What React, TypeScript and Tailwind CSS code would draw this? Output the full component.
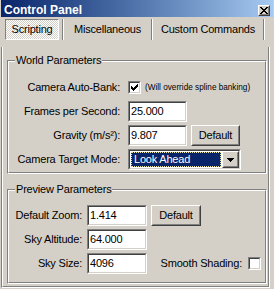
import React from "react";

function PixelGlyph({ rows, color = "#000" }: { rows: string[]; color?: string }) {
  const w = rows[0].length;
  const h = rows.length;
  const rects: React.ReactNode[] = [];
  rows.forEach((r, y) =>
    r.split("").forEach((c, x) => {
      if (c === "X") rects.push(<rect key={`${x}-${y}`} x={x} y={y} width={1} height={1} fill={color} />);
    })
  );
  return (
    <svg width={w} height={h} viewBox={`0 0 ${w} ${h}`} shapeRendering="crispEdges" className="block">
      {rects}
    </svg>
  );
}

const CLOSE = ["XX....XX", ".XX..XX.", "..XXXX..", "...XX...", "..XXXX..", ".XX..XX.", "XX....XX"];
const CHECK = ["......X", ".....XX", "X...XXX", "XX.XXX.", "XXXXX..", ".XXX...", "..X...."];
const ARROW = ["XXXXXXX", ".XXXXX.", "..XXX..", "...X..."];

function Sunken({ className = "", innerClass = "", children }: { className?: string; innerClass?: string; children?: React.ReactNode }) {
  return (
    <div className={`border border-t-[#808080] border-l-[#808080] border-b-white border-r-white ${className}`}>
      <div className={`h-full w-full border border-t-[#404040] border-l-[#404040] border-b-[#d4d0c8] border-r-[#d4d0c8] bg-white ${innerClass}`}>
        {children}
      </div>
    </div>
  );
}

function Raised({ className = "", children }: { className?: string; children?: React.ReactNode }) {
  return (
    <div className={`border border-t-white border-l-white border-b-[#404040] border-r-[#404040] bg-[#d4d0c8] ${className}`}>
      <div className="h-full w-full border border-t-[#d4d0c8] border-l-[#d4d0c8] border-b-[#808080] border-r-[#808080] flex items-center justify-center">
        {children}
      </div>
    </div>
  );
}

function Etched({ className = "", children }: { className?: string; children?: React.ReactNode }) {
  return (
    <div className={`border border-t-[#808080] border-l-[#808080] border-b-white border-r-white ${className}`}>
      <div className="h-full w-full border border-t-white border-l-white border-b-[#808080] border-r-[#808080]">{children}</div>
    </div>
  );
}

function Edit({ value, className = "" }: { value: string; className?: string }) {
  return (
    <Sunken className={`h-[21px] ${className}`} innerClass="flex items-center pl-[1px]">
      <span className="leading-[13px]">{value}</span>
    </Sunken>
  );
}

function Check({ checked }: { checked?: boolean }) {
  return (
    <Sunken className="w-[13px] h-[13px] shrink-0" innerClass="flex items-center justify-center">
      {checked ? <PixelGlyph rows={CHECK} /> : null}
    </Sunken>
  );
}

function Sep() {
  return (
    <div className="flex h-full shrink-0">
      <div className="w-[1px] h-full bg-[#808080]" />
      <div className="w-[1px] h-full bg-white" />
    </div>
  );
}

export default function App() {
  return (
    <div className="w-[274px] h-[289px] bg-[#d4d0c8] text-black text-[11px] tracking-[-0.2px] font-['Liberation_Sans',Arial,sans-serif] flex flex-col overflow-hidden">
      {/* Title bar */}
      <div className="mx-[1px] h-[17px] pt-[3px] pl-[3px] pr-[3px] flex items-center justify-between bg-gradient-to-r from-[#0a246a] to-[#a6caf0]">
        <span className="text-white font-bold text-[12px] tracking-normal leading-[14px]">Control Panel</span>
        <Raised className="w-[12px] h-[11px]">
          <PixelGlyph rows={CLOSE} />
        </Raised>
      </div>

      {/* Tabs */}
      <div className="mt-[2px] h-[21px] flex pl-[5px]">
        <div className="w-[54px] h-full border border-t-[#808080] border-l-[#808080] border-b-white border-r-white bg-[repeating-conic-gradient(#ffffff_0_25%,#d4d0c8_0_50%)] bg-[length:2px_2px] flex items-center justify-center">
          <span className="leading-[13px]">Scripting</span>
        </div>
        <div className="w-[3px]" />
        <Sep />
        <div className="w-[87px] h-full flex items-center justify-center">
          <span className="leading-[13px]">Miscellaneous</span>
        </div>
        <Sep />
        <div className="w-[110px] h-full flex items-center justify-center">
          <span className="leading-[13px]">Custom Commands</span>
        </div>
        <Sep />
      </div>

      {/* Tab page frame */}
      <div className="mt-[7px] ml-[1px] w-[269px] h-[241px] border-l border-r border-b border-l-[#808080] border-r-white border-b-white">
        <div className="h-full w-full border-l border-r border-b border-l-white border-r-[#808080] border-b-[#808080] pl-[4px] pt-[13px]">
          {/* World Parameters */}
          <div className="relative w-[260px] h-[114px]">
            <Etched className="w-full h-full">
              <div className="pt-[15px] flex flex-col gap-[3px]">
                <div className="flex items-center h-[21px]">
                  <div className="w-[111px] text-right mr-[8px] leading-[13px]">Camera Auto-Bank:</div>
                  <Check checked />
                  <span className="ml-[4px] text-[8.2px] tracking-normal leading-[10px]">(Will override spline banking)</span>
                </div>
                <div className="flex items-center h-[21px]">
                  <div className="w-[111px] text-right mr-[8px] leading-[13px]">Frames per Second:</div>
                  <Edit value="25.000" className="w-[59px]" />
                </div>
                <div className="flex items-center h-[21px]">
                  <div className="w-[111px] text-right mr-[8px] leading-[13px]">Gravity (m/s²):</div>
                  <Edit value="9.807" className="w-[59px]" />
                  <Raised className="ml-[4px] w-[49px] h-[21px]">
                    <span className="leading-[13px]">Default</span>
                  </Raised>
                </div>
                <div className="flex items-center h-[21px]">
                  <div className="w-[111px] text-right mr-[8px] leading-[13px]">Camera Target Mode:</div>
                  <Sunken className="w-[113px] h-[21px]" innerClass="flex">
                    <div className="flex-1 m-[1px] border border-dotted border-[#e8e4a0] bg-[#0a246a] text-white flex items-center pl-[2px]">
                      <span className="leading-[13px]">Look Ahead</span>
                    </div>
                    <Raised className="w-[17px] h-full shrink-0">
                      <PixelGlyph rows={ARROW} />
                    </Raised>
                  </Sunken>
                </div>
              </div>
            </Etched>
            <span className="absolute left-[8px] top-[-6px] px-[1px] bg-[#d4d0c8] leading-[13px]">World Parameters</span>
          </div>

          {/* Preview Parameters */}
          <div className="relative mt-[15px] w-[260px] h-[95px]">
            <Etched className="w-full h-full">
              <div className="pt-[14px] flex flex-col gap-[3px]">
                <div className="flex items-center h-[21px]">
                  <div className="w-[73px] text-right mr-[5px] leading-[13px]">Default Zoom:</div>
                  <Edit value="1.414" className="w-[60px]" />
                  <Raised className="ml-[4px] w-[50px] h-[21px]">
                    <span className="leading-[13px]">Default</span>
                  </Raised>
                </div>
                <div className="flex items-center h-[21px]">
                  <div className="w-[73px] text-right mr-[5px] leading-[13px]">Sky Altitude:</div>
                  <Edit value="64.000" className="w-[60px]" />
                </div>
                <div className="flex items-center h-[21px]">
                  <div className="w-[73px] text-right mr-[5px] leading-[13px]">Sky Size:</div>
                  <Edit value="4096" className="w-[60px]" />
                  <div className="flex-1 text-right leading-[13px]">Smooth Shading:</div>
                  <div className="ml-[6px] mr-[4px]">
                    <Check />
                  </div>
                </div>
              </div>
            </Etched>
            <span className="absolute left-[8px] top-[-6px] px-[1px] bg-[#d4d0c8] leading-[13px]">Preview Parameters</span>
          </div>
        </div>
      </div>
    </div>
  );
}
